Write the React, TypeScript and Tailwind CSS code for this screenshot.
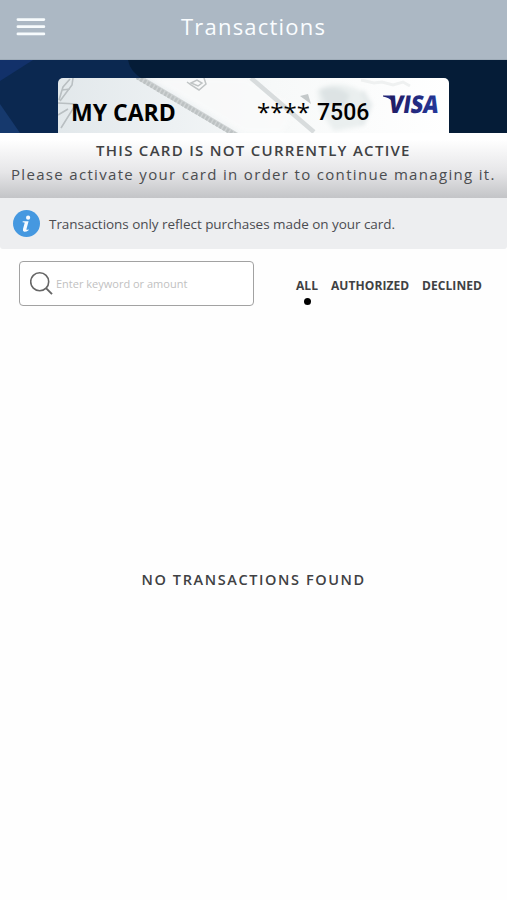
import React from "react";

function MenuIcon() {
  return (
    <svg className="h-5 w-[30px]" viewBox="0 0 30 20" fill="none" stroke="#f7fbfd" strokeWidth="2.7" strokeLinecap="round">
      <path d="M1.9 2.6H27.9M1.9 9.7H27.9M1.9 16.9H27.9" />
    </svg>
  );
}

function CardArt() {
  return (
    <svg className="absolute inset-0 h-full w-full" viewBox="0 0 391 55" preserveAspectRatio="none">
      <defs>
        <linearGradient id="cardBase" x1="0" y1="0" x2="1" y2="0">
          <stop offset="0" stopColor="#e2e8eb" />
          <stop offset="0.3" stopColor="#edf1f3" />
          <stop offset="0.55" stopColor="#f7f9f9" />
          <stop offset="1" stopColor="#ffffff" />
        </linearGradient>
        <filter id="soft" x="-20%" y="-20%" width="140%" height="140%">
          <feGaussianBlur stdDeviation="2.2" />
        </filter>
        <filter id="fine">
          <feGaussianBlur stdDeviation="0.7" />
        </filter>
      </defs>
      <rect width="391" height="55" fill="url(#cardBase)" />
      <path d="M90 0H190L240 30L225 55H185Z" fill="#fafbfb" opacity="0.8" filter="url(#soft)" />
      <g filter="url(#fine)">
        <path d="M80 -1L180 58" stroke="#cfd3d4" strokeWidth="5.5" />
        <path d="M79 -1L179 58" stroke="#bdc2c3" strokeWidth="4.5" strokeDasharray="2.5 1.5" />
        <path d="M129 4L133 7L141 12L148 6L146 0M133 5L139 2L144 5L140 8Z" fill="none" stroke="#c0c4c5" strokeWidth="1.5" />
        <path d="M1 22L5 9L12 1M15 0L14 7L2 23M4 12L12 11M0 25L18 26L3 50M0 37L10 31" fill="none" stroke="#b9bfc2" strokeWidth="1.6" />
        <path d="M193 0L256 54" stroke="#d8dcdd" strokeWidth="4.5" />
        <path d="M242 18L250 16L253 26Z" fill="#c4c9ca" />
      </g>
      <g filter="url(#soft)">
        <path d="M259 12Q278 1 301 12L311 26L304 48L276 53L263 34Z" fill="#eaefef" />
        <path d="M262 12Q278 5 292 17L286 29L268 27Z" fill="#dde3e4" />
        <path d="M304 13L312 27L304 47" fill="none" stroke="#e2e8e9" strokeWidth="4" />
      </g>
      <path d="M303 2L316 5L324 4L335 7L345 4L352 8" fill="none" stroke="#eff1f1" strokeWidth="3" filter="url(#fine)" />
    </svg>
  );
}

function VisaLogo() {
  return (
    <svg className="h-[26px] w-[64px] overflow-visible" viewBox="0 0 64 26">
      <defs>
        <linearGradient id="visaInk" x1="0" x2="1" y1="0" y2="0">
          <stop offset="0" stopColor="#211b62" />
          <stop offset="1" stopColor="#25389a" />
        </linearGradient>
      </defs>
      <path d="M1 2.6H8Q9.4 2.6 9.8 4L10.6 8.4Q7 4.4 1 3.4Z" fill="url(#visaInk)" />
      <text
        x="8.2"
        y="20.3"
        fontSize="24.5"
        fontWeight="800"
        textLength="50"
        lengthAdjust="spacingAndGlyphs"
        fill="url(#visaInk)"
        fontFamily="'Open Sans', sans-serif"
        transform="translate(0.5 0) skewX(-9)"
      >
        VISA
      </text>
    </svg>
  );
}

function InfoIcon() {
  return (
    <svg className="h-[27px] w-[27px] shrink-0" viewBox="0 0 27 27">
      <circle cx="13.5" cy="13.5" r="13.5" fill="#4598e0" />
      <circle cx="15.1" cy="7.7" r="2.1" fill="#f5faff" />
      <path d="M9.8 11.2H15.6L13.4 19.2Q13.2 20.2 15.7 19.2L15.4 20.5Q13 22 11.1 21.7Q9.4 21.3 10 19.1L11.7 12.8Q11.6 12.1 9.5 12.2Z" fill="#f5faff" />
    </svg>
  );
}

function SearchIcon() {
  return (
    <svg className="h-6 w-6 shrink-0" viewBox="0 0 24 24" fill="none" stroke="#666" strokeWidth="1.6">
      <circle cx="9.7" cy="9.8" r="9" />
      <path d="M16 16.2L22 22.2" strokeWidth="1.9" />
    </svg>
  );
}

export default function App() {
  return (
    <div className="h-[900px] w-[507px] overflow-hidden whitespace-nowrap bg-[#fefefe] font-['Open_Sans',sans-serif] text-[#404143]">
      <header className="flex h-[60px] items-start border-b border-[#9eabb7] bg-[#acb8c4] pl-4">
        <div className="mt-[17px]">
          <MenuIcon />
        </div>
        <h1 className="ml-[135px] mt-[10px] text-[22px] leading-8 tracking-[1.2px] text-[#fafdff]">Transactions</h1>
      </header>

      <section className="relative h-[73px] bg-[#051c37] pl-[58px] pt-[18px]">
        <svg className="absolute left-0 top-0 h-[73px] w-[170px]" viewBox="0 0 170 73">
          <path d="M0 0H128Q130 12 144 20V73H0Z" fill="#0b2850" />
          <path d="M0 0H33L0 21Z" fill="#12316a" />
          <path d="M0 44L20 73H0Z" fill="#16396d" />
        </svg>
        <div className="relative flex h-[55px] w-[391px] overflow-hidden rounded-t-[5px]">
          <CardArt />
          <div className="relative flex w-full text-black">
            <span className="ml-[13px] mt-[18px] w-[186px] text-[23px] font-bold leading-8">MY CARD</span>
            <span className="mt-[18px] w-[60px] text-[24px] font-medium leading-8">****</span>
            <span className="mt-[19px] w-[65px] font-[Roboto,sans-serif] text-[23px] font-medium leading-8">7506</span>
            <div className="mt-[15px]">
              <VisaLogo />
            </div>
          </div>
        </div>
      </section>

      <section className="h-[65px] bg-linear-to-b from-[#ffffff] from-10% via-[#e6e6e8] via-60% to-[#c3c4c7] pt-[5px]">
        <p className="pl-[96px] text-[15px] font-semibold leading-6 tracking-[1.28px]">THIS CARD IS NOT CURRENTLY ACTIVE</p>
        <p className="pl-[11px] text-[15px] leading-6 tracking-[1.32px] text-[#4b4d50]">Please activate your card in order to continue managing it.</p>
      </section>

      <section className="flex h-[51px] items-center rounded-b-[3px] bg-[#edeef0] pl-[13px]">
        <InfoIcon />
        <p className="ml-[9px] text-[13.5px] leading-6 tracking-[-0.04px] text-[#4b4c50]">Transactions only reflect purchases made on your card.</p>
      </section>

      <section className="flex pl-[19px] pt-3">
        <div className="flex h-[45px] w-[235px] items-center rounded-[4px] border-[1.5px] border-[#a2a2a2] bg-white pl-[10px]">
          <SearchIcon />
          <span className="ml-[2px] text-[11px] leading-5 text-[#c1c1c1]">Enter keyword or amount</span>
        </div>
        <nav className="ml-[42px] flex pt-[14px] text-[12px] font-bold leading-5 tracking-[0.08px]">
          <div className="flex w-[35px] flex-col pt-px">
            <span>ALL</span>
            <span className="ml-2 mt-[2px] h-[7px] w-[7px] rounded-full bg-black" />
          </div>
          <span className="w-[91px] pt-px">AUTHORIZED</span>
          <span className="pt-px">DECLINED</span>
        </nav>
      </section>

      <p className="pl-[141.5px] pt-[262px] text-[14.5px] font-semibold leading-6 tracking-[1.6px]">NO TRANSACTIONS FOUND</p>
    </div>
  );
}
